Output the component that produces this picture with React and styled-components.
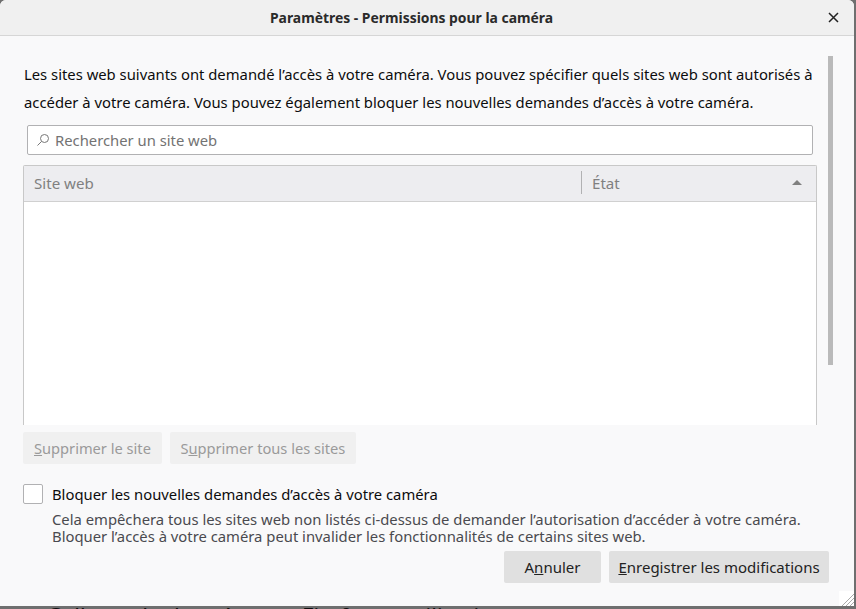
import styled, { createGlobalStyle } from "styled-components"

const Global = createGlobalStyle`
html,body{margin:0;padding:0;height:100%;background:#6f6f6f;}
body{font-family:"Noto Sans",sans-serif;overflow:hidden;}
`
const Page = styled.div`
width:856px;
height:609px;
display:flex;
flex-direction:column;
overflow:hidden;
background:#6f6f6f;
`
const Dialog = styled.div`
height:606px;
flex-shrink:0;
margin-right:2px;
display:flex;
flex-direction:column;
background:#f9f9fa;
border-radius:6px 6px 0 0;
position:relative;
`
const TitleBar = styled.div`
height:35px;
flex-shrink:0;
display:flex;
align-items:center;
justify-content:center;
background:#f0f0f0;
border-bottom:1px solid #d6d6d6;
border-radius:6px 6px 0 0;
font-size:13.9px;
font-weight:700;
color:#2a2a2a;
position:relative;
padding-right:31px;
`
const CloseBtn = styled.svg`
position:absolute;
right:15px;
top:12px;
width:11px;
height:11px;
`
const Body = styled.div`
flex:1;
display:flex;
min-height:0;
`
const Content = styled.div`
width:794px;
margin-left:23px;
display:flex;
flex-direction:column;
`
const Intro = styled.p`
margin:0;
padding:24px 0 0 1px;
font-size:14.82px;
line-height:28px;
color:#0c0c0d;
white-space:nowrap;
`
const Search = styled.div`
height:30px;
width:786px;
box-sizing:border-box;
margin:9px 0 0 4px;
background:#fff;
border:1px solid #b1b1b3;
border-radius:2px;
display:flex;
align-items:center;
padding-left:8px;
gap:5px;
font-size:14.8px;
color:#737373;
`
const Table = styled.div`
margin-top:10px;
height:260px;
border:1px solid #c8c8c8;
border-bottom:none;
border-radius:2px 2px 0 0;
background:#fff;
box-sizing:border-box;
`
const TableHead = styled.div`
height:36px;
box-sizing:border-box;
padding-bottom:2px;
background:#ededf0;
border-bottom:1px solid #d0d0d0;
display:flex;
align-items:center;
font-size:15.1px;
color:#808080;
`
const SiteCol = styled.div`
width:547px;
padding-left:10px;
`
const StateCol = styled.div`
flex:1;
height:23px;
border-left:1px solid #b1b1b3;
padding-left:10px;
display:flex;
align-items:center;
justify-content:space-between;
padding-right:14px;
`
const SortArrow = styled.span`
width:0;
height:0;
border-left:5px solid transparent;
border-right:5px solid transparent;
border-bottom:5px solid #808080;
`
const RowButtons = styled.div`
display:flex;
gap:8px;
margin-top:7px;
`
const Button = styled.div`
height:32px;
box-sizing:border-box;
display:flex;
align-items:center;
justify-content:center;
padding:0 ${p => p.$pad ?? 10.5}px;
width:${p => p.$w ? p.$w + "px" : "auto"};
background:${p => p.$disabled ? "#f0f0f0" : "#e0e0e0"};
color:${p => p.$disabled ? "#9a9a9a" : "#222"};
border-radius:2px;
font-size:${p => p.$disabled ? 14.65 : 15}px;
white-space:pre;
`
const CheckRow = styled.div`
display:flex;
align-items:center;
gap:9px;
margin-top:20px;
font-size:14.8px;
color:#0c0c0d;
`
const Box = styled.div`
width:20px;
height:20px;
box-sizing:border-box;
background:#fff;
border:1px solid #b1b1b3;
border-radius:2px;
`
const Hint = styled.p`
margin:7px 0 0 29px;
font-size:14.82px;
line-height:17px;
color:#4a4a4f;
white-space:nowrap;
`
const Footer = styled.div`
display:flex;
justify-content:flex-end;
gap:8px;
margin-top:6px;
margin-right:-12px;
`
const Scrollbar = styled.div`
width:5px;
height:309px;
margin:20px 0 0 11px;
background:#bababa;
`
const Grip = styled.svg`
position:absolute;
right:0;
bottom:0;
width:15px;
height:15px;
background:#fff;
`
const Behind = styled.div`
flex:1;
background:#6f6f6f;
overflow:hidden;
font-size:22px;
line-height:19px;
color:#0c0c0d;
padding-left:47px;
white-space:nowrap;
`

export default function App() {
  return (
    <Page>
      <Global />
      <Dialog>
        <TitleBar>
          Paramètres - Permissions pour la caméra
          <CloseBtn viewBox="0 0 11 11">
            <path d="M1 1L10 10M10 1L1 10" stroke="#222" strokeWidth="1.5" fill="none" />
          </CloseBtn>
        </TitleBar>
        <Body>
          <Content>
            <Intro>
              Les sites web suivants ont demandé l’accès à votre caméra. Vous pouvez spécifier quels sites web sont autorisés à<br />
              accéder à votre caméra. Vous pouvez également bloquer les nouvelles demandes d’accès à votre caméra.
            </Intro>
            <Search>
              <svg width="14" height="14" viewBox="0 0 14 14" fill="none" stroke="#777" strokeWidth="1">
                <circle cx="8.5" cy="5.5" r="4" />
                <path d="M5.5 8.5L1.5 12.5" />
              </svg>
              Rechercher un site web
            </Search>
            <Table>
              <TableHead>
                <SiteCol>Site web</SiteCol>
                <StateCol>État<SortArrow /></StateCol>
              </TableHead>
            </Table>
            <RowButtons>
              <Button $disabled $pad={11}><span><u>S</u>upprimer le site</span></Button>
              <Button $disabled><span>S<u>u</u>pprimer tous les sites</span></Button>
            </RowButtons>
            <CheckRow>
              <Box />
              Bloquer les nouvelles demandes d’accès à votre caméra
            </CheckRow>
            <Hint>
              Cela empêchera tous les sites web non listés ci-dessus de demander l’autorisation d’accéder à votre caméra.<br />
              Bloquer l’accès à votre caméra peut invalider les fonctionnalités de certains sites web.
            </Hint>
            <Footer>
              <Button $w={97}><span>A<u>n</u>nuler</span></Button>
              <Button $w={220} $pad={0}><span><u>E</u>nregistrer les modifications</span></Button>
            </Footer>
          </Content>
          <Scrollbar />
        </Body>
        <Grip viewBox="0 0 15 15">
          <path d="M15 3L3 15M15 7L7 15M15 11L11 15" stroke="#aaa" strokeWidth="1" fill="none" />
        </Grip>
      </Dialog>
      <Behind>Collecte de données par Firefox et utilisation</Behind>
    </Page>
  )
}
